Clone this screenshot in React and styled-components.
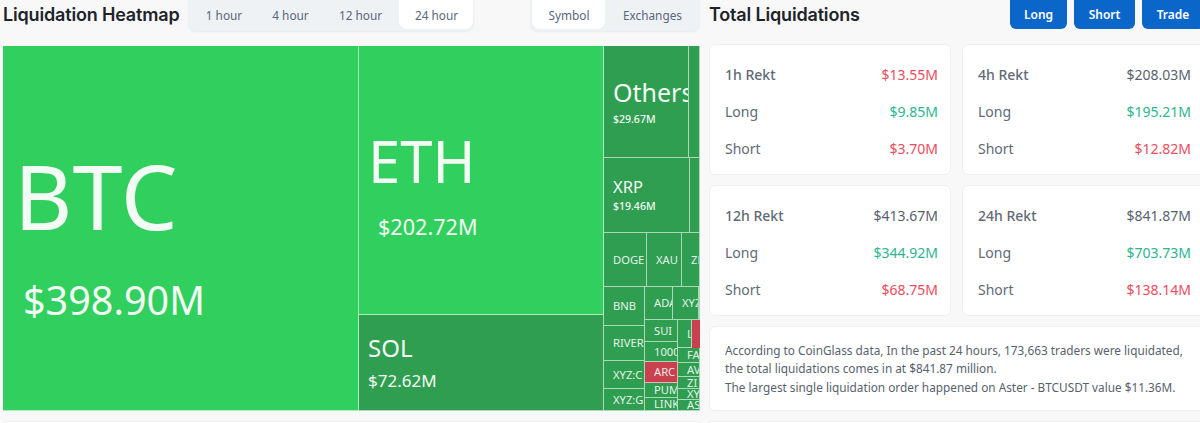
import React from "react";
import styled, { createGlobalStyle } from "styled-components";

const GlobalStyle = createGlobalStyle`
  html, body {
    margin: 0;
    height: 423px;
    overflow: hidden;
    background: #f8f8f8;
    font-family: "Noto Sans", "Liberation Sans", sans-serif;
  }
`;

const Page = styled.div`
  display: grid;
  grid-template-columns: 697px 495px;
  column-gap: 9px;
  width: 1205px;
  padding-left: 3px;
  box-sizing: border-box;
`;

const Column = styled.section`
  display: flex;
  flex-direction: column;
`;

const Header = styled.header`
  display: flex;
  align-items: flex-start;
  height: ${({ $height }) => $height}px;
`;

const Title = styled.h2`
  flex: none;
  margin: 0;
  font-family: Inter, "Liberation Sans", sans-serif;
  font-size: 18px;
  line-height: 29px;
  font-weight: 600;
  letter-spacing: -0.17px;
  white-space: nowrap;
  color: #1e2329;
`;

const Tabs = styled.div`
  flex: none;
  display: flex;
  align-items: center;
  height: 31px;
  padding: 0 1px 0 ${({ $pad }) => $pad || 0}px;
  margin-left: ${({ $ml }) => $ml}px;
  box-sizing: border-box;
  background: #eff2f5;
  border-radius: 0 0 8px 8px;
  box-shadow: 0 1px 2px rgba(0, 0, 0, 0.06);
`;

const Tab = styled.div`
  width: ${({ $w }) => $w}px;
  height: 29px;
  margin-top: -2px;
  display: flex;
  align-items: center;
  justify-content: center;
  font-size: 11.8px;
  color: #58667e;
  border-radius: 0 0 8px 8px;
  background: ${({ $active }) => ($active ? "#fff" : "transparent")};
`;

const Buttons = styled.div`
  display: flex;
  gap: 7px;
  margin-left: auto;
`;

const ActionButton = styled.button`
  width: ${({ $w }) => $w}px;
  height: 29px;
  padding: 0;
  border: 0;
  border-radius: 0 0 6px 6px;
  background: #0a66c9;
  color: #fff;
  font-family: inherit;
  font-size: 12px;
  font-weight: 600;
`;

const Map = styled.div`
  display: flex;
  height: 365px;
  background: #d8eedd;
  overflow: hidden;
`;

const Slice = styled.div`
  display: flex;
  flex-direction: ${({ $dir }) => $dir || "column"};
  flex: ${({ $size }) => ($size ? `0 0 ${$size}px` : "1 1 0")};
  min-width: 0;
  min-height: 0;
`;

const Cell = styled.div`
  flex: ${({ $size }) => ($size ? `0 0 ${$size}px` : "1 1 0")};
  min-width: 0;
  min-height: 0;
  box-sizing: border-box;
  display: flex;
  flex-direction: column;
  justify-content: center;
  align-items: flex-start;
  padding-left: ${({ $pl }) => $pl || 0}px;
  overflow: hidden;
  white-space: nowrap;
  color: #f3fbf5;
  border-right: 1px solid rgba(255, 255, 255, 0.6);
  border-bottom: 1px solid rgba(255, 255, 255, 0.6);
  background: ${({ $tone }) =>
    $tone === "bright" ? "#31d05e" : $tone === "red" ? "#c9404f" : "#2f9e50"};
`;

const Name = styled.span`
  font-size: ${({ $fs }) => $fs}px;
  line-height: 1.15;
  margin-top: ${({ $mt }) => $mt || 0}px;
`;

const Amount = styled.span`
  font-size: ${({ $fs }) => $fs}px;
  font-weight: ${({ $fw }) => $fw || 400};
  line-height: 1.2;
  margin-top: ${({ $mt }) => $mt || 0}px;
  margin-left: ${({ $ml }) => $ml || 0}px;
`;

const TinyName = styled.span`
  font-size: 11.2px;
  line-height: 1;
  opacity: 0.92;
`;

const CutBar = styled.div`
  flex: 0 0 8px;
  background: #c9404f;
`;

const CardGrid = styled.div`
  display: grid;
  grid-template-columns: 242px 242px;
  grid-auto-rows: 131px;
  gap: 10px 11px;
  margin-bottom: 10px;
`;

const Panel = styled.div`
  box-sizing: border-box;
  background: #fff;
  border: 1px solid #eeeff1;
  border-radius: 6px;
`;

const StatCard = styled(Panel)`
  display: flex;
  flex-direction: column;
  justify-content: center;
  gap: 13px;
  padding: 4px 12px 0 15px;
`;

const StatRow = styled.div`
  display: flex;
  justify-content: space-between;
  font-size: 14px;
  line-height: 24px;
  color: #616a75;
`;

const StatLabel = styled.span`
  font-weight: ${({ $strong }) => ($strong ? 500 : 400)};
`;

const StatValue = styled.span`
  color: ${({ $tone }) =>
    $tone === "up" ? "#2bb592" : $tone === "down" ? "#ec4c5c" : "#58626e"};
`;

const Note = styled(Panel)`
  height: 85px;
  display: flex;
  align-items: center;
  padding-left: 15px;
  font-size: 11.8px;
  line-height: 18.5px;
  color: #58626e;
`;

const BottomCard = styled(Panel)`
  height: 2px;
  margin-top: 10px;
  border-bottom: 0;
  border-radius: 6px 6px 0 0;
`;

const stats = [
  { name: "1h Rekt", total: "$13.55M", totalTone: "down", long: "$9.85M", short: "$3.70M" },
  { name: "4h Rekt", total: "$208.03M", long: "$195.21M", short: "$12.82M" },
  { name: "12h Rekt", total: "$413.67M", long: "$344.92M", short: "$68.75M" },
  { name: "24h Rekt", total: "$841.87M", long: "$703.73M", short: "$138.14M" },
];

const Tiny = ({ label, size, tone }) => (
  <Cell $size={size} $pl={9} $tone={tone}>
    <TinyName>{label}</TinyName>
  </Cell>
);

const Heatmap = () => (
  <Map>
    <Cell $size={356} $tone="bright" $pl={11}>
      <Name $fs={90} $mt={12}>BTC</Name>
      <Amount $fs={39.5} $mt={29} $ml={9}>$398.90M</Amount>
    </Cell>
    <Slice $size={245}>
      <Cell $size={269} $tone="bright" $pl={9}>
        <Name $fs={58} $mt={8}>ETH</Name>
        <Amount $fs={21.6} $mt={19} $ml={10}>$202.72M</Amount>
      </Cell>
      <Cell $pl={9}>
        <Name $fs={24}>SOL</Name>
        <Amount $fs={17} $mt={9}>$72.62M</Amount>
      </Cell>
    </Slice>
    <Slice>
      <Slice $dir="row" $size={112}>
        <Cell $size={85} $pl={9}>
          <Name $fs={25}>Others</Name>
          <Amount $fs={10.5} $fw={500} $mt={6}>$29.67M</Amount>
        </Cell>
        <Cell />
      </Slice>
      <Slice $dir="row" $size={75}>
        <Cell $size={86} $pl={9}>
          <Name $fs={16.5}>XRP</Name>
          <Amount $fs={10.5} $fw={500} $mt={3}>$19.46M</Amount>
        </Cell>
        <Cell />
      </Slice>
      <Slice $dir="row" $size={54}>
        <Tiny label="DOGE" size={43} />
        <Tiny label="XAU" size={35} />
        <Tiny label="ZE" />
      </Slice>
      <Slice $dir="row">
        <Slice $size={41}>
          <Tiny label="BNB" size={39} />
          <Tiny label="RIVER" size={35} />
          <Tiny label="XYZ:C" size={28} />
          <Tiny label="XYZ:G" />
        </Slice>
        <Slice>
          <Slice $dir="row" $size={33}>
            <Tiny label="ADA" size={28} />
            <Tiny label="XYZ" size={26} />
            <Cell />
          </Slice>
          <Slice $dir="row">
            <Slice $size={33}>
              <Tiny label="SUI" size={22} />
              <Tiny label="1000" size={20} />
              <Tiny label="ARC" size={21} tone="red" />
              <Tiny label="PUM" size={15} />
              <Tiny label="LINK" />
            </Slice>
            <Slice>
              <Slice $dir="row" $size={28}>
                <Tiny label="LT" />
                <CutBar />
              </Slice>
              <Tiny label="FA" size={15} />
              <Tiny label="AV" size={14} />
              <Tiny label="ZI" size={12} />
              <Tiny label="XY" size={11} />
              <Tiny label="AS" />
            </Slice>
          </Slice>
        </Slice>
      </Slice>
    </Slice>
  </Map>
);

export default function App() {
  return (
    <>
      <GlobalStyle />
      <Page>
        <Column>
          <Header $height={46}>
            <Title>Liquidation Heatmap</Title>
            <Tabs $ml={9}>
              <Tab $w={71}>1 hour</Tab>
              <Tab $w={62}>4 hour</Tab>
              <Tab $w={78}>12 hour</Tab>
              <Tab $w={74} $active>24 hour</Tab>
            </Tabs>
            <Tabs $ml={56} $pad={2}>
              <Tab $w={73} $active>Symbol</Tab>
              <Tab $w={94}>Exchanges</Tab>
            </Tabs>
          </Header>
          <Heatmap />
          <BottomCard />
        </Column>
        <Column>
          <Header $height={44}>
            <Title>Total Liquidations</Title>
            <Buttons>
              <ActionButton $w={57}>Long</ActionButton>
              <ActionButton $w={61}>Short</ActionButton>
              <ActionButton $w={62}>Trade</ActionButton>
            </Buttons>
          </Header>
          <CardGrid>
            {stats.map((s) => (
              <StatCard key={s.name}>
                <StatRow>
                  <StatLabel $strong>{s.name}</StatLabel>
                  <StatValue $tone={s.totalTone}>{s.total}</StatValue>
                </StatRow>
                <StatRow>
                  <StatLabel>Long</StatLabel>
                  <StatValue $tone="up">{s.long}</StatValue>
                </StatRow>
                <StatRow>
                  <StatLabel>Short</StatLabel>
                  <StatValue $tone="down">{s.short}</StatValue>
                </StatRow>
              </StatCard>
            ))}
          </CardGrid>
          <Note>
            <div>
              According to CoinGlass data, In the past 24 hours, 173,663 traders were liquidated,
              <br />
              the total liquidations comes in at $841.87 million.
              <br />
              The largest single liquidation order happened on Aster - BTCUSDT value $11.36M.
            </div>
          </Note>
          <BottomCard />
        </Column>
      </Page>
    </>
  );
}
